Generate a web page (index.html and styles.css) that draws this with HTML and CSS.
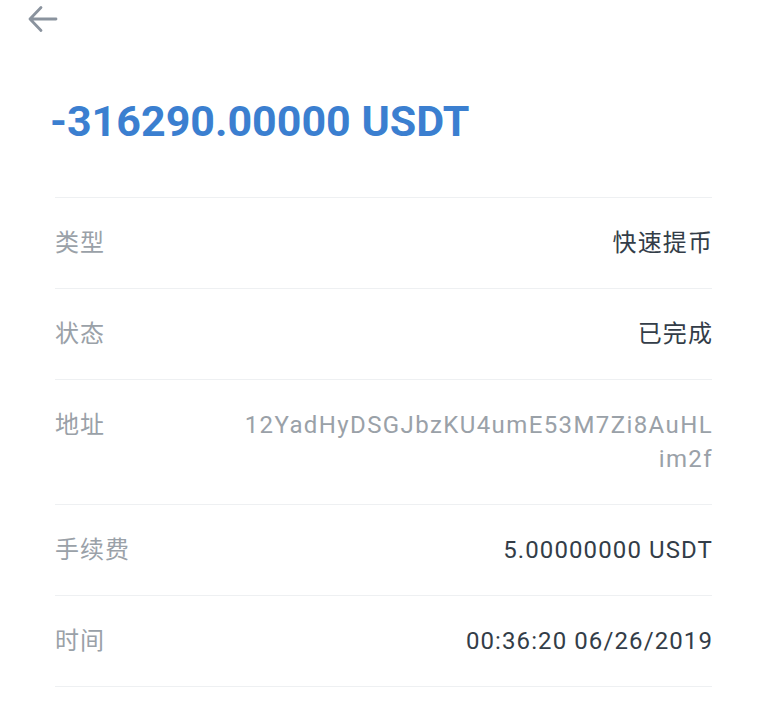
FILE: index.html
```html
<!DOCTYPE html>
<html lang="zh-CN">
<head>
    <meta charset="UTF-8">
    <meta name="viewport" content="width=device-width, initial-scale=1.0">
    <title>提币详情</title>
    <link rel="stylesheet" href="styles.css">
</head>
<body>

<div class="page">
    <div class="topbar">
        <svg class="back" width="34" height="34" viewBox="0 0 34 34">
            <path d="M31 17H5M16 5.5L5 17L16 28.5" fill="none" stroke="#8a939e" stroke-width="2.8" stroke-linecap="round" stroke-linejoin="round"/>
        </svg>
    </div>

    <h1 class="amount">-316290.00000 USDT</h1>

    <div class="details">
        <div class="row">
            <span class="label">类型</span>
            <span class="value">快速提币</span>
        </div>
        <div class="row">
            <span class="label">状态</span>
            <span class="value">已完成</span>
        </div>
        <div class="row">
            <span class="label">地址</span>
            <span class="value address">12YadHyDSGJbzKU4umE53M7Zi8AuHL<br>im2f</span>
        </div>
        <div class="row">
            <span class="label">手续费</span>
            <span class="value">5.00000000 USDT</span>
        </div>
        <div class="row">
            <span class="label">时间</span>
            <span class="value">00:36:20 06/26/2019</span>
        </div>
    </div>
</div>

</body>
</html>
```

FILE: styles.css
```css
body {
    margin: 0;
    padding: 0;
    background-color: #fff;
    font-family: Roboto, "Noto Sans CJK SC", sans-serif;
    color: #2f3a45;
}
.page {
    padding: 0 56px 0 55px;
}
.topbar {
    height: 42px;
    margin-left: -30px;
    padding-top: 2px;
    box-sizing: border-box;
}
.back {
    display: block;
}
.amount {
    margin: 47px 0 44px -5px;
    font-size: 43px;
    font-weight: bold;
    line-height: 64px;
    color: #3b7fd0;
}
.details {
    border-top: 1px solid #eef0f2;
}
.row {
    display: flex;
    justify-content: space-between;
    align-items: flex-start;
    padding: 28px 0;
    border-bottom: 1px solid #eef0f2;
    font-size: 24px;
    line-height: 34px;
}
.label {
    color: #9aa1a8;
    letter-spacing: 1px;
    flex-shrink: 0;
}
.value {
    text-align: right;
    letter-spacing: 1.1px;
    margin-right: -1px;
    color: #333d48;
}
.address {
    letter-spacing: 1.4px;
    color: #9aa1a8;
}
```
